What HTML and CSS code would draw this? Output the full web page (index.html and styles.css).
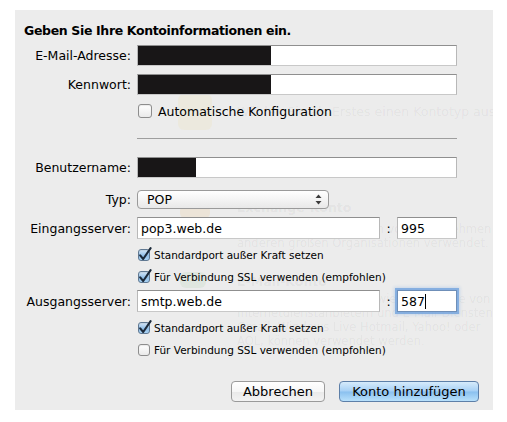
FILE: index.html
```html
<!DOCTYPE html>
<html lang="de">
<head>
<meta charset="utf-8">
<title>Konto hinzufügen</title>
<link rel="stylesheet" href="styles.css">
</head>
<body>
<div class="sheet">
  <!-- window content showing through behind the sheet -->
  <div class="underlay" aria-hidden="true">
    <span class="u-icon u-icon-mail"></span>
    <p class="u-line u-l1">Wählen Sie als Erstes einen Kontotyp aus</p>
    <span class="u-icon u-icon-exchange"></span>
    <p class="u-line u-head u-l2">Exchange-Konto</p>
    <p class="u-line u-small u-l3">Exchange-Konten werden von Unternehmen und</p>
    <p class="u-line u-small u-l4">anderen großen Organisationen verwendet.</p>
    <span class="u-icon u-icon-pop"></span>
    <p class="u-line u-head u-l5">E-Mail-Konto</p>
    <p class="u-line u-small u-l6">POP- oder IMAP-Konten, wie z. B. solche von</p>
    <p class="u-line u-small u-l7">Internetdienstanbietern und E-Mail-Diensten wie</p>
    <p class="u-line u-small u-l8">Gmail, Windows Live Hotmail, Yahoo! oder</p>
    <p class="u-line u-small u-l9">AOL, können verwendet werden.</p>
  </div>

  <form class="form">
    <h1 class="title">Geben Sie Ihre Kontoinformationen ein.</h1>

    <div class="row row-email">
      <span class="label">E-Mail-Adresse:</span>
      <div class="field field-wide"><span class="redact redact-long"></span></div>
    </div>

    <div class="row row-pass">
      <span class="label">Kennwort:</span>
      <div class="field field-wide"><span class="redact redact-long"></span></div>
    </div>

    <div class="row row-auto">
      <span class="label"></span>
      <span class="check check-big"></span>
      <span class="check-text">Automatische Konfiguration</span>
    </div>

    <div class="row row-sep">
      <span class="label"></span>
      <span class="separator"></span>
    </div>

    <div class="row row-user">
      <span class="label">Benutzername:</span>
      <div class="field field-wide"><span class="redact redact-short"></span></div>
    </div>

    <div class="row row-type">
      <span class="label">Typ:</span>
      <div class="popup">
        <span class="popup-text">POP</span>
        <svg class="popup-arrows" width="7" height="11" viewBox="0 0 7 11">
          <path d="M3.5 0.5 L6.5 4 L0.5 4 Z" fill="#3c3c3c"/>
          <path d="M3.5 10.5 L6.5 7 L0.5 7 Z" fill="#3c3c3c"/>
        </svg>
      </div>
    </div>

    <div class="row row-in">
      <span class="label">Eingangsserver:</span>
      <div class="field field-host"><span class="value">pop3.web.de</span></div>
      <span class="colon">:</span>
      <div class="field field-port"><span class="value">995</span></div>
    </div>

    <div class="row row-opt">
      <span class="label"></span>
      <span class="check check-small is-on">
        <svg width="16" height="16" viewBox="0 0 16 16"><path d="M3.2 8.4 L6.2 12 L13.6 1.2" fill="none" stroke="#1c2a3a" stroke-width="2.1" stroke-linecap="round" stroke-linejoin="round"/></svg>
      </span>
      <span class="opt-text">Standardport außer Kraft setzen</span>
    </div>

    <div class="row row-opt">
      <span class="label"></span>
      <span class="check check-small is-on">
        <svg width="16" height="16" viewBox="0 0 16 16"><path d="M3.2 8.4 L6.2 12 L13.6 1.2" fill="none" stroke="#1c2a3a" stroke-width="2.1" stroke-linecap="round" stroke-linejoin="round"/></svg>
      </span>
      <span class="opt-text">Für Verbindung SSL verwenden (empfohlen)</span>
    </div>

    <div class="row row-out">
      <span class="label">Ausgangsserver:</span>
      <div class="field field-host"><span class="value">smtp.web.de</span></div>
      <span class="colon">:</span>
      <div class="field field-port is-focused"><span class="value">587</span><span class="caret"></span></div>
    </div>

    <div class="row row-opt">
      <span class="label"></span>
      <span class="check check-small is-on">
        <svg width="16" height="16" viewBox="0 0 16 16"><path d="M3.2 8.4 L6.2 12 L13.6 1.2" fill="none" stroke="#1c2a3a" stroke-width="2.1" stroke-linecap="round" stroke-linejoin="round"/></svg>
      </span>
      <span class="opt-text">Standardport außer Kraft setzen</span>
    </div>

    <div class="row row-opt">
      <span class="label"></span>
      <span class="check check-small"></span>
      <span class="opt-text">Für Verbindung SSL verwenden (empfohlen)</span>
    </div>

    <div class="buttons">
      <button type="button" class="btn btn-cancel">Abbrechen</button>
      <button type="button" class="btn btn-default">Konto hinzufügen</button>
    </div>
  </form>
</div>
</body>
</html>
```

FILE: styles.css
```css
html, body {
  margin: 0;
  padding: 0;
  background: #ffffff;
}

body {
  font-family: "DejaVu Sans", "Liberation Sans", sans-serif;
  color: #000;
  padding: 10px 0 0 15px;
}

/* the sheet dropped over the account window */
.sheet {
  position: relative;
  width: 478px;
  height: 400px;
  background: #ececec;
  overflow: hidden;
}

/* faded window content behind the sheet */
.underlay {
  position: absolute;
  inset: 0;
  color: rgba(0, 0, 0, 0.055);
  font-size: 12.5px;
}

.u-line {
  position: absolute;
  left: 222px;
  margin: 0;
  white-space: nowrap;
  line-height: 14px;
}

.u-head { font-weight: bold; font-size: 12.5px; }
.u-small { font-size: 11.5px; }

.u-l1 { top: 95px; }
.u-l2 { top: 191px; }
.u-l3 { top: 212px; }
.u-l4 { top: 226px; }
.u-l5 { top: 265px; }
.u-l6 { top: 282px; }
.u-l7 { top: 296px; }
.u-l8 { top: 310px; }
.u-l9 { top: 324px; }

.u-icon {
  position: absolute;
  border-radius: 6px;
}

.u-icon-mail {
  left: 163px;
  top: 84px;
  width: 34px;
  height: 36px;
  background: rgba(240, 200, 60, 0.08);
}

.u-icon-exchange {
  left: 165px;
  top: 195px;
  width: 30px;
  height: 14px;
  background: rgba(240, 160, 40, 0.1);
}

.u-icon-pop {
  left: 165px;
  top: 262px;
  width: 26px;
  height: 16px;
  background: rgba(80, 170, 80, 0.08);
}

.form {
  position: relative;
  display: flex;
  flex-direction: column;
  margin: 0;
  padding-top: 13px;
}

.title {
  margin: 0 0 0 9px;
  font-size: 12.5px;
  letter-spacing: -0.35px;
  font-weight: bold;
  line-height: 16px;
  height: 16px;
}

.row {
  display: flex;
  align-items: center;
}

.label {
  flex: none;
  width: 116px;
  margin-right: 6px;
  text-align: right;
  font-size: 12.5px;
  white-space: nowrap;
}

.row-email { margin-top: 6px; height: 21px; }
.row-pass  { margin-top: 8px; height: 21px; }
.row-auto  { margin-top: 8px; height: 16px; }
.row-sep   { margin-top: 19px; height: 1px; }
.row-user  { margin-top: 18px; height: 21px; }
.row-type  { margin-top: 12px; height: 19px; }
.row-in    { margin-top: 8px; height: 22px; }
.row-out   { margin-top: 2px; height: 22px; }
.row-opt   { height: 22px; }
.row-in + .row-opt,
.row-out + .row-opt { margin-top: 5px; }

/* text fields */
.field {
  box-sizing: border-box;
  height: 100%;
  background: #fff;
  border: 1px solid;
  border-color: #8f8f8f #b8b8b8 #c8c8c8 #b8b8b8;
  display: flex;
  align-items: center;
  overflow: hidden;
}

.field-wide { width: 320px; }
.field-host { width: 243px; }
.field-port { width: 60px; }

.value {
  font-size: 12.5px;
  padding-left: 3px;
  white-space: nowrap;
}

.colon {
  width: 17px;
  text-align: center;
  font-size: 12.5px;
}

.field.is-focused {
  border-color: #6f8fb8;
  box-shadow: 0 0 0 2px rgba(110, 160, 220, 0.75), 0 0 3px 3px rgba(120, 170, 230, 0.3);
}

.caret {
  width: 1px;
  height: 15px;
  background: #000;
}

.redact {
  display: block;
  height: 100%;
  background: #181617;
  margin-left: -1px;
}

.redact-long  { width: 134px; }
.redact-short { width: 59px; }

/* checkboxes */
.check {
  flex: none;
  position: relative;
  box-sizing: border-box;
  border: 1px solid #8d8d8d;
  border-radius: 3px;
  background: linear-gradient(#ffffff, #eaeaea);
  box-shadow: inset 0 1px 1px rgba(0, 0, 0, 0.08);
}

.check-big {
  width: 14px;
  height: 14px;
  margin-left: 1px;
}

.check-small {
  width: 12px;
  height: 12px;
  margin-left: 1px;
}

.check.is-on {
  border-color: #5f7892;
  background: linear-gradient(#d6e8f8, #92bfe8 55%, #a9d2f3);
}

.check svg {
  position: absolute;
  left: -2px;
  top: -3px;
}

.check-text {
  margin-left: 6px;
  font-size: 12.5px;
  white-space: nowrap;
}

.opt-text {
  margin-left: 4px;
  font-size: 10.5px;
  white-space: nowrap;
}

.separator {
  width: 320px;
  height: 1px;
  background: #9e9e9e;
}

/* pop-up menu */
.popup {
  box-sizing: border-box;
  width: 192px;
  height: 100%;
  border: 1px solid #9a9a9a;
  border-radius: 4px;
  background: linear-gradient(#ffffff, #f4f4f4 50%, #e8e8e8);
  display: flex;
  align-items: center;
  justify-content: space-between;
  padding: 0 6px 0 9px;
}

.popup-text {
  font-size: 12.5px;
}

.popup-arrows { display: block; }

/* push buttons */
.buttons {
  display: flex;
  justify-content: flex-end;
  gap: 14px;
  margin-top: 20px;
  padding-right: 14px;
}

.btn {
  box-sizing: border-box;
  height: 21px;
  border-radius: 4px;
  font-family: inherit;
  font-size: 13px;
  color: #000;
  padding: 0;
  line-height: 19px;
}

.btn-cancel {
  width: 94px;
  border: 1px solid #9a9a9a;
  background: linear-gradient(#ffffff, #f6f6f6 50%, #e9e9e9 51%, #f3f3f3);
}

.btn-default {
  width: 140px;
  border: 1px solid #5d7fa8;
  background: linear-gradient(#d6ebfb, #a6d0f5 48%, #8ac0ef 52%, #b8e0fb);
}
```
